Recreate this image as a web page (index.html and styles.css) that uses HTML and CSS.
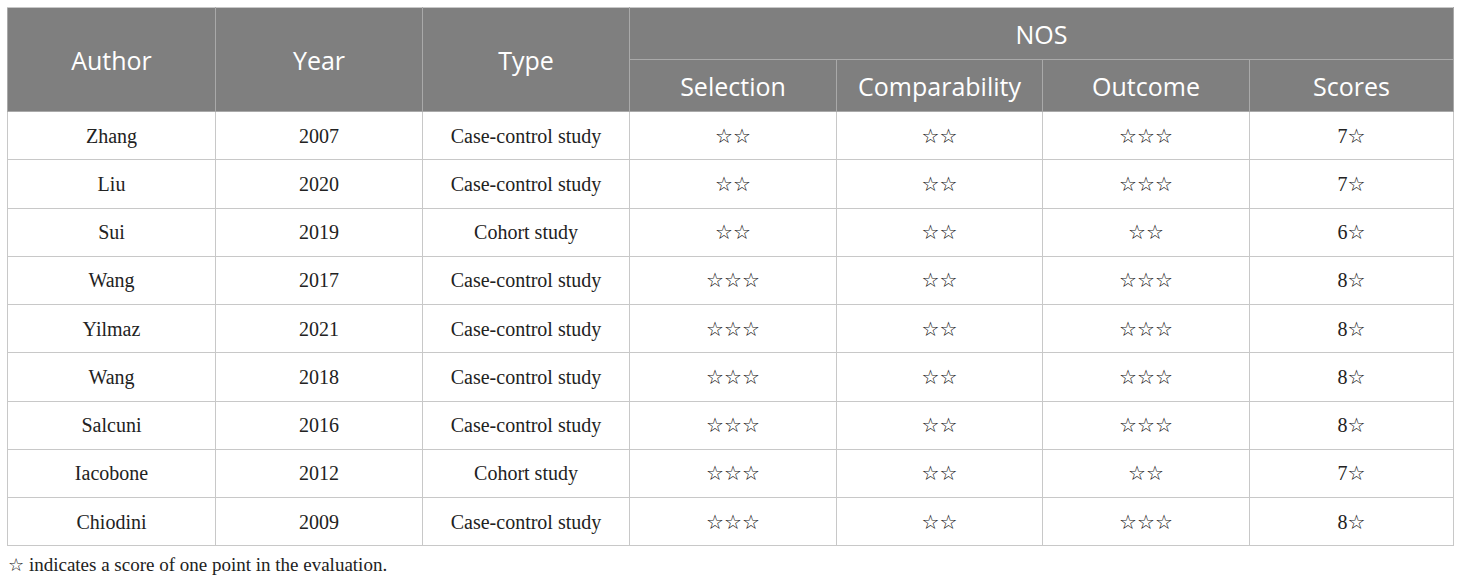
FILE: index.html
```html
<!DOCTYPE html>
<html lang="en">
<head>
<meta charset="utf-8">
<title>NOS quality assessment</title>
<link rel="stylesheet" href="styles.css">
</head>
<body>
<div class="wrap">
<table class="nos">
  <colgroup>
    <col class="c1"><col class="c2"><col class="c3"><col class="c4"><col class="c5"><col class="c6"><col class="c7">
  </colgroup>
  <thead>
    <tr class="h1">
      <th rowspan="2">Author</th>
      <th rowspan="2">Year</th>
      <th rowspan="2">Type</th>
      <th colspan="4">NOS</th>
    </tr>
    <tr class="h2">
      <th>Selection</th>
      <th>Comparability</th>
      <th>Outcome</th>
      <th>Scores</th>
    </tr>
  </thead>
  <tbody>
    <tr><td>Zhang</td><td>2007</td><td>Case-control study</td><td><span class="s">☆☆</span></td><td><span class="s">☆☆</span></td><td><span class="s">☆☆☆</span></td><td>7<span class="s">☆</span></td></tr>
    <tr><td>Liu</td><td>2020</td><td>Case-control study</td><td><span class="s">☆☆</span></td><td><span class="s">☆☆</span></td><td><span class="s">☆☆☆</span></td><td>7<span class="s">☆</span></td></tr>
    <tr><td>Sui</td><td>2019</td><td>Cohort study</td><td><span class="s">☆☆</span></td><td><span class="s">☆☆</span></td><td><span class="s">☆☆</span></td><td>6<span class="s">☆</span></td></tr>
    <tr><td>Wang</td><td>2017</td><td>Case-control study</td><td><span class="s">☆☆☆</span></td><td><span class="s">☆☆</span></td><td><span class="s">☆☆☆</span></td><td>8<span class="s">☆</span></td></tr>
    <tr><td>Yilmaz</td><td>2021</td><td>Case-control study</td><td><span class="s">☆☆☆</span></td><td><span class="s">☆☆</span></td><td><span class="s">☆☆☆</span></td><td>8<span class="s">☆</span></td></tr>
    <tr><td>Wang</td><td>2018</td><td>Case-control study</td><td><span class="s">☆☆☆</span></td><td><span class="s">☆☆</span></td><td><span class="s">☆☆☆</span></td><td>8<span class="s">☆</span></td></tr>
    <tr><td>Salcuni</td><td>2016</td><td>Case-control study</td><td><span class="s">☆☆☆</span></td><td><span class="s">☆☆</span></td><td><span class="s">☆☆☆</span></td><td>8<span class="s">☆</span></td></tr>
    <tr><td>Iacobone</td><td>2012</td><td>Cohort study</td><td><span class="s">☆☆☆</span></td><td><span class="s">☆☆</span></td><td><span class="s">☆☆</span></td><td>7<span class="s">☆</span></td></tr>
    <tr><td>Chiodini</td><td>2009</td><td>Case-control study</td><td><span class="s">☆☆☆</span></td><td><span class="s">☆☆</span></td><td><span class="s">☆☆☆</span></td><td>8<span class="s">☆</span></td></tr>
  </tbody>
</table>
<p class="note"><span class="s">☆</span> indicates a score of one point in the evaluation.</p>
</div>
</body>
</html>
```

FILE: styles.css
```css
html, body {
  margin: 0;
  padding: 0;
  background: #ffffff;
}
.wrap {
  padding: 7px 0 0 7px;
}
.nos {
  border-collapse: collapse;
  table-layout: fixed;
  width: 1446px;
  font-family: "Liberation Serif", "Times New Roman", serif;
  color: #222222;
}
.c1 { width: 208px; }
.c2 { width: 207px; }
.c3 { width: 207px; }
.c4 { width: 207px; }
.c5 { width: 206px; }
.c6 { width: 207px; }
.c7 { width: 204px; }

.nos th {
  background: #7f7f7f;
  color: #ffffff;
  font-family: "Open Sans", "Lato", sans-serif;
  font-weight: 400;
  font-size: 25px;
  line-height: 28px;
  height: 51px;
  padding: 0;
  border: 1px solid #a9a9a9;
  text-align: center;
  vertical-align: middle;
}
.nos thead tr.h1 th {
  border-top-color: #c8c8c8;
}
.nos td {
  height: 47.25px;
  padding: 0;
  border: 1px solid #c8c8c8;
  text-align: center;
  vertical-align: middle;
  font-size: 20px;
  line-height: 24px;
}
.s {
  font-family: "DejaVu Sans", sans-serif;
  font-size: 20px;
  color: #111111;
}
.note {
  margin: 8px 0 0 1px;
  font-family: "Liberation Serif", "Times New Roman", serif;
  font-size: 19px;
  color: #222222;
}
.note .s {
  font-size: 18px;
}
```
